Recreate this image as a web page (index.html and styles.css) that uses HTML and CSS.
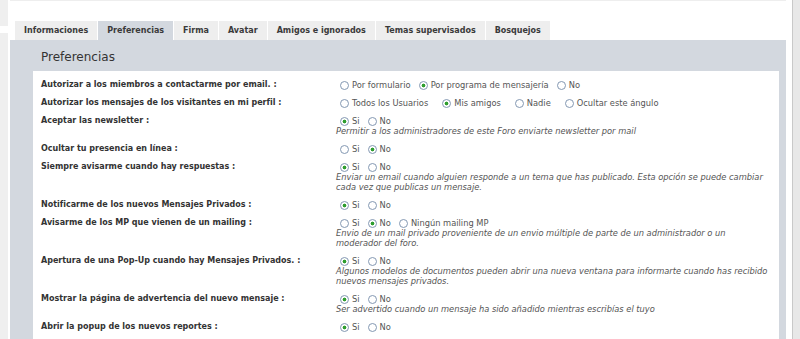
FILE: index.html
```html
<!DOCTYPE html>
<html lang="es">
<head>
  <meta charset="UTF-8" />
  <title>Perfil | Preferencias</title>
  <link rel="stylesheet" href="styles.css">
</head>
<body>
  <div class="page">
    <aside class="side-left">
      <div class="side-box short"></div>
      <div class="side-box"></div>
    </aside>

    <main class="main">
      <div class="main-top"></div>

      <ul class="tabs">
        <li class="tab">Informaciones</li>
        <li class="tab active">Preferencias</li>
        <li class="tab">Firma</li>
        <li class="tab">Avatar</li>
        <li class="tab">Amigos e ignorados</li>
        <li class="tab">Temas supervisados</li>
        <li class="tab">Bosquejos</li>
      </ul>

      <div class="panel">
        <h2>Preferencias</h2>
        <form class="box">
          <div class="row">
            <div class="label">Autorizar a los miembros a contactarme por email. :</div>
            <div class="field">
              <div class="opts">
                <label class="opt"><input type="radio" name="contact">Por formulario</label>
                <label class="opt"><input type="radio" name="contact" checked>Por programa de mensajería</label>
                <label class="opt"><input type="radio" name="contact">No</label>
              </div>
            </div>
          </div>

          <div class="row">
            <div class="label">Autorizar los mensajes de los visitantes en mi perfil :</div>
            <div class="field">
              <div class="opts wide">
                <label class="opt"><input type="radio" name="wall">Todos los Usuarios</label>
                <label class="opt"><input type="radio" name="wall" checked>Mis amigos</label>
                <label class="opt"><input type="radio" name="wall">Nadie</label>
                <label class="opt"><input type="radio" name="wall">Ocultar este ángulo</label>
              </div>
            </div>
          </div>

          <div class="row">
            <div class="label">Aceptar las newsletter :</div>
            <div class="field">
              <div class="opts">
                <label class="opt"><input type="radio" name="news" checked>Si</label>
                <label class="opt"><input type="radio" name="news">No</label>
              </div>
              <p class="desc">Permitir a los administradores de este Foro enviarte newsletter por mail</p>
            </div>
          </div>

          <div class="row">
            <div class="label">Ocultar tu presencia en línea :</div>
            <div class="field">
              <div class="opts">
                <label class="opt"><input type="radio" name="online">Si</label>
                <label class="opt"><input type="radio" name="online" checked>No</label>
              </div>
            </div>
          </div>

          <div class="row">
            <div class="label">Siempre avisarme cuando hay respuestas :</div>
            <div class="field">
              <div class="opts">
                <label class="opt"><input type="radio" name="notify" checked>Si</label>
                <label class="opt"><input type="radio" name="notify">No</label>
              </div>
              <p class="desc">Enviar un email cuando alguien responde a un tema que has publicado. Esta opción se puede cambiar cada vez que publicas un mensaje.</p>
            </div>
          </div>

          <div class="row">
            <div class="label">Notificarme de los nuevos Mensajes Privados :</div>
            <div class="field">
              <div class="opts">
                <label class="opt"><input type="radio" name="pm" checked>Si</label>
                <label class="opt"><input type="radio" name="pm">No</label>
              </div>
            </div>
          </div>

          <div class="row">
            <div class="label">Avisarme de los MP que vienen de un mailing :</div>
            <div class="field">
              <div class="opts">
                <label class="opt"><input type="radio" name="mailing">Si</label>
                <label class="opt"><input type="radio" name="mailing" checked>No</label>
                <label class="opt"><input type="radio" name="mailing">Ningún mailing MP</label>
              </div>
              <p class="desc">Envio de un mail privado proveniente de un envio múltiple de parte de un administrador o un<br>moderador del foro.</p>
            </div>
          </div>

          <div class="row">
            <div class="label">Apertura de una Pop-Up cuando hay Mensajes Privados. :</div>
            <div class="field">
              <div class="opts">
                <label class="opt"><input type="radio" name="popup" checked>Si</label>
                <label class="opt"><input type="radio" name="popup">No</label>
              </div>
              <p class="desc">Algunos modelos de documentos pueden abrir una nueva ventana para informarte cuando has recibido nuevos mensajes privados.</p>
            </div>
          </div>

          <div class="row">
            <div class="label">Mostrar la página de advertencia del nuevo mensaje :</div>
            <div class="field">
              <div class="opts">
                <label class="opt"><input type="radio" name="warn" checked>Si</label>
                <label class="opt"><input type="radio" name="warn">No</label>
              </div>
              <p class="desc">Ser advertido cuando un mensaje ha sido añadido mientras escribías el tuyo</p>
            </div>
          </div>

          <div class="row">
            <div class="label">Abrir la popup de los nuevos reportes :</div>
            <div class="field">
              <div class="opts">
                <label class="opt"><input type="radio" name="reports" checked>Si</label>
                <label class="opt"><input type="radio" name="reports">No</label>
              </div>
            </div>
          </div>
        </form>
      </div>
    </main>

    <aside class="side-right"></aside>
  </div>
</body>
</html>
```

FILE: styles.css
```css
:root {
  --panel: #d3d8df;
  --tab: #eeeeee;
  --side: #efefef;
  --text: #333333;
  --muted: #555555;
}

html, body {
  margin: 0;
  overflow: hidden;
}

body {
  font-family: "DejaVu Sans", Verdana, sans-serif;
  font-size: 8px;
  color: var(--text);
  background-color: #ffffff;
}

.page {
  display: flex;
  min-height: 100vh;
}

/* neighbouring columns, only their edges are visible */
.side-left {
  width: 8px;
  display: flex;
  flex-direction: column;
  gap: 7px;
  margin-right: 2px;
}

.side-box {
  flex: 1;
  background-color: var(--side);
}

.side-box.short {
  flex: 0 0 26px;
}

.side-right {
  width: 7px;
  margin-left: 6px;
  border-left: 1px solid #c9c9c9;
  background-color: #e8e8e8;
}

.main {
  flex: 1;
  display: flex;
  flex-direction: column;
}

.main-top {
  height: 1px;
  background-color: #eeeeee;
}

/* tabs */
.tabs {
  display: flex;
  list-style: none;
  margin: 20px 0 0;
  padding: 0 0 0 5px;
}

.tab {
  padding: 0 9px;
  margin-right: 1px;
  line-height: 19px;
  font-weight: bold;
  color: #3a3a3a;
  background-color: var(--tab);
  cursor: pointer;
}

.tab.active {
  background-color: var(--panel);
}

/* panel */
.panel {
  flex: 1;
  background-color: var(--panel);
  padding: 9px 7px 0 23px;
}

.panel h2 {
  margin: 0 0 6px 8px;
  font-size: 12px;
  line-height: 16px;
  font-weight: normal;
  color: var(--text);
}

.box {
  background-color: #ffffff;
  padding: 5px 8px 20px;
  min-height: 300px;
}

.row {
  display: flex;
  padding: 4px 0;
  line-height: 10px;
}

.label {
  width: 295px;
  flex-shrink: 0;
  font-weight: bold;
}

.field {
  flex: 1;
}

.opts {
  display: flex;
  align-items: center;
  font-size: 8.3px;
  color: var(--muted);
}

.opt {
  display: inline-flex;
  align-items: center;
  margin-right: 4px;
  white-space: pre;
}

.opts.wide .opt {
  margin-right: 10px;
}

.opt input {
  appearance: none;
  -webkit-appearance: none;
  width: 9px;
  height: 9px;
  margin: 0 3px 0 4px;
  border: 1px solid #8398b2;
  border-radius: 50%;
  background: #ffffff;
}

.opt input:checked {
  background: radial-gradient(circle, #2f9e2f 0 1.6px, #ffffff 2.2px);
}

.desc {
  margin: 0;
  font-size: 8.3px;
  font-style: italic;
  color: var(--muted);
}
```
